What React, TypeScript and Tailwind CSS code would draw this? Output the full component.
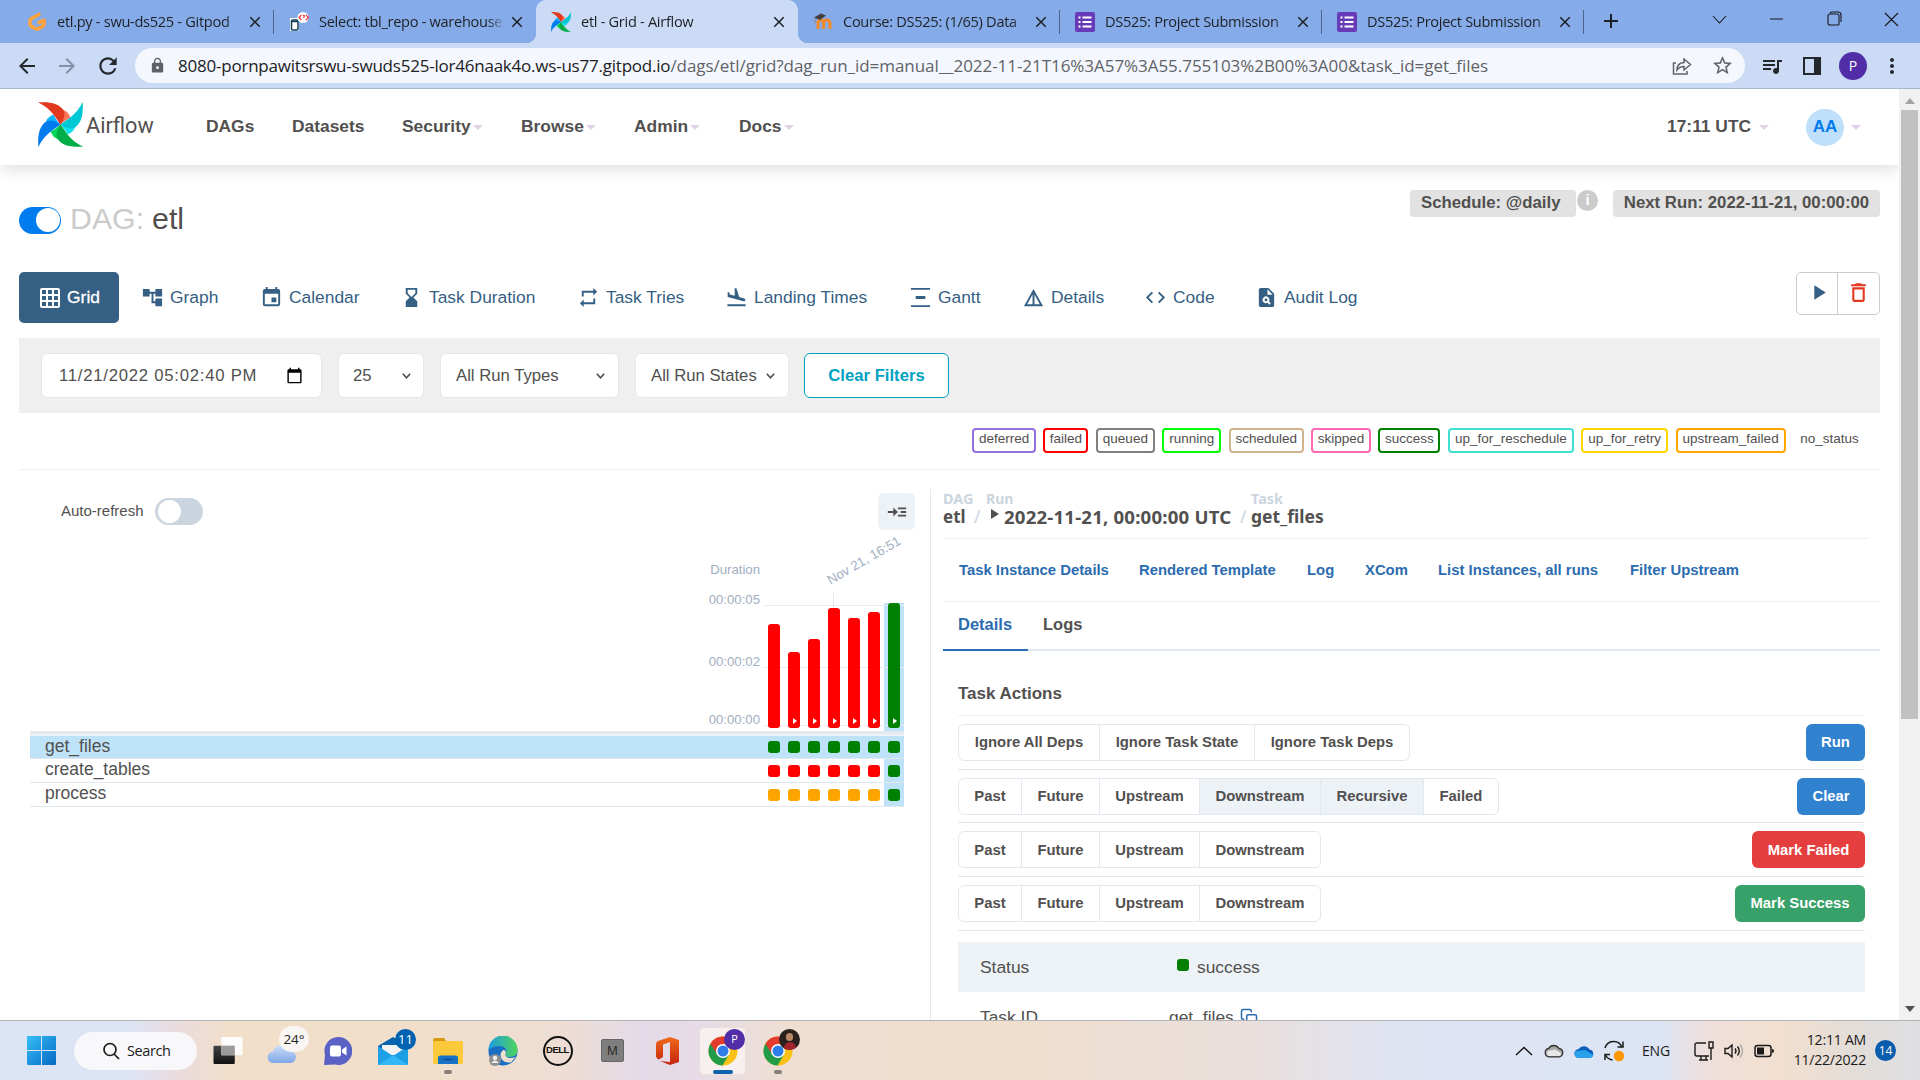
import React from "react";
import {
  MdGridOn, MdAccountTree, MdEvent, MdHourglassBottom, MdRepeat, MdFlightLand, MdVerticalDistribute,
  MdDetails, MdCode, MdPlagiarism, MdPlayArrow, MdDeleteOutline, MdStarBorder, MdQueueMusic, MdArrowBack,
  MdArrowForward, MdRefresh, MdLock, MdClose, MdAdd, MdReadMore, MdMoreVert, MdCalendarToday,
} from "react-icons/md";
import { FiCopy } from "react-icons/fi";

function Pinwheel({ className }: { className: string }) {
  const blades = [
    ["#e43921", "#ff7557", 0],
    ["#00c7d4", "#11e1ee", 90],
    ["#00ad46", "#04d659", 180],
    ["#017cee", "#0cb6ff", 270],
  ] as const;
  return (
    <svg viewBox="0 0 45 45" className={className}>
      {blades.map(([main, light, r]) => (
        <g key={r} transform={`rotate(${r} 22.5 22.5)`}>
          <path fill={light} d="M25.5 8C30 9.500 31 13 32.500 15.500C29 17 25 20 22.500 22.500C22 18 24 14 25.500 8Z" />
          <path fill={main} d="M0 .3C14 -.5 21 2 25.500 8C28 13 25 19 22.500 22.500C18 17 14 7 0 .3Z" />
        </g>
      ))}
    </svg>
  );
}

function Favicon({ kind }: { kind: string }) {
  if (kind === "gitpod")
    return (
      <svg viewBox="0 0 20 20" className="h-5 w-5 shrink-0">
        <path d="M12 2.500L4.500 6.500Q3 7.500 3 9v3q0 1.500 1.500 2.400l4 2.200q1.500.8 3 0l4-2.200Q17 13.500 17 12V8l-5 2.700" fill="none" stroke="#ffa33e" strokeWidth="3.600" strokeLinecap="round" strokeLinejoin="round" />
      </svg>
    );
  if (kind === "adminer")
    return (
      <svg viewBox="0 0 20 20" className="h-5 w-5 shrink-0">
        <path d="M1 6h9v13H1z" fill="#fff" />
        <rect x="2.500" y="8" width="6.500" height="10" rx="1" fill="#fff" stroke="#123f52" strokeWidth="1.500" />
        <path d="M2.500 9.500h6.500" stroke="#123f52" strokeWidth="1.500" />
        <circle cx="14" cy="5.500" r="5.500" fill="#fff" />
        <path d="M12.500 3L10 5.500L12.500 8M17 3l2.500 2.500L17 8M14 3.500q2-.5 1 1.500l-.5 1" fill="none" stroke="#e33" strokeWidth="1.200" />
      </svg>
    );
  if (kind === "airflow") return <Pinwheel className="h-5 w-5 shrink-0" />;
  if (kind === "moodle")
    return (
      <svg viewBox="0 0 20 20" className="h-5 w-5 shrink-0">
        <path d="M5 17v-6q0-3 2.800-3t2.800 3v6M10.600 11q0-3 3-3t3.400 3v6" fill="none" stroke="#f08a2c" strokeWidth="3" />
        <path d="M1 5.500L8 1.500l5 2L7 8z" fill="#41403f" />
        <path d="M2 6v5" stroke="#8a8a8a" />
      </svg>
    );
  return (
    <svg viewBox="0 0 20 20" className="h-5 w-5 shrink-0">
      <rect width="20" height="20" rx="2" fill="#673ab7" />
      <path d="M3.500 5.500h2M3.500 10h2M3.500 14.500h2M7.500 5.500h9M7.500 10h9M7.500 14.500h9" stroke="#fff" strokeWidth="2.200" />
    </svg>
  );
}

const browserTabs = [
  { icon: "gitpod", title: "etl.py - swu-ds525 - Gitpod" },
  { icon: "adminer", title: "Select: tbl_repo - warehouse" },
  { icon: "airflow", title: "etl - Grid - Airflow", active: true },
  { icon: "moodle", title: "Course: DS525: (1/65) Data" },
  { icon: "form", title: "DS525: Project Submission" },
  { icon: "form", title: "DS525: Project Submission" },
];

function TabStrip() {
  return (
    <div className="flex h-[43px] shrink-0 bg-[#86abe9] pl-[12px] text-[#1d2125]">
      {browserTabs.map((t, i) => (
        <div
          key={i}
          className={
            t.active
              ? "relative flex w-[262px] items-center rounded-t-[10px] bg-[#cbdbf6] pl-[15px]"
              : "relative flex w-[262px] items-center pl-[15px]"
          }
        >
          {t.active && (
            <>
              <i className="absolute bottom-0 -left-2.5 h-2.5 w-2.5 bg-[radial-gradient(circle_at_0_0,transparent_10px,#cbdbf6_10.500px)]" />
              <i className="absolute -right-2.5 bottom-0 h-2.5 w-2.5 bg-[radial-gradient(circle_at_100%_0,transparent_10px,#cbdbf6_10.500px)]" />
            </>
          )}
          <Favicon kind={t.icon} />
          <span className="ml-[10px] w-[183px] text-[14.600px] tracking-[-0.300px] whitespace-nowrap [mask-image:linear-gradient(to_right,#000_92%,transparent_102%)]">
            {t.title}
          </span>
          <MdClose className="ml-1.5 h-[18px] w-[18px]" />
          {(i === 0 || i > 2) && <i className="absolute top-[10px] right-0 h-[24px] w-px bg-[#4b6590]" />}
        </div>
      ))}
      <MdAdd className="mt-[9px] ml-[15px] h-6 w-6" />
      <svg viewBox="0 0 200 20" className="mt-[9px] ml-[87px] h-5 w-[200px]" fill="none" stroke="#16191d" strokeWidth="1.100">
        <path d="M3 7l6.500 7L16 7M60 10h13M118 7q0-2 2-2h7q2 0 2 2v8q0 1-1 1h-8q-2 0-2-2zM120 4q1-1 3-1h5q3 0 3 3v7M175 4l13 13M188 4l-13 13" />
      </svg>
    </div>
  );
}

function Toolbar() {
  return (
    <div className="flex h-[46px] shrink-0 items-center border-b border-[#a5b5d2] bg-[#cbdbf6] text-[#24282c]">
      <MdArrowBack className="ml-[15px] h-6 w-6" />
      <MdArrowForward className="ml-4 h-6 w-6 text-[#8490a5]" />
      <MdRefresh className="ml-4 h-[26px] w-[26px]" />
      <div className="ml-[14px] flex h-[35px] w-[1610px] items-center rounded-full bg-[#f4f7fd] pl-[14px]">
        <MdLock className="h-[17px] w-[17px] shrink-0 text-[#5f6368]" />
        <span className="ml-3 w-[1494px] shrink-0 text-[17px] tracking-[-0.050px] whitespace-nowrap text-[#5f6368]">
          <span className="tracking-[-0.220px] text-[#202124]">8080-pornpawitsrswu-swuds525-lor46naak4o.ws-us77.gitpod.io</span>
          /dags/etl/grid?dag_run_id=manual__2022-11-21T16%3A57%3A55.755103%2B00%3A00&amp;task_id=get_files
        </span>
        <svg viewBox="0 0 20 20" className="h-5 w-5 shrink-0" fill="none" stroke="#5f6368" strokeWidth="1.500">
          <path d="M4 7H1.500v11H15v-3M5 14q0-7 7-7.500V3l6.500 5.500L12 14v-3.500q-4.500 0-7 3.500z" />
        </svg>
        <MdStarBorder className="ml-[19px] h-[23px] w-[23px] shrink-0 text-[#5f6368]" />
      </div>
      <MdQueueMusic className="ml-[15px] h-6 w-6" />
      <i className="ml-[19px] h-[18px] w-[18px] border-[2.500px] border-r-[7px] border-[#24282c]" />
      <span className="ml-[18px] flex h-7 w-7 items-center justify-center rounded-full bg-[#512da8] text-[14px] text-white">P</span>
      <MdMoreVert className="ml-[13px] h-6 w-6" />
    </div>
  );
}

const Caret = ({ className }: { className: string }) => (
  <i className={`h-0 w-0 border-x-[5px] border-t-[5px] border-x-transparent border-t-[#e2d3e6] ${className}`} />
);

function NavBar() {
  const items = [
    ["DAGs", "w-[86px]", false],
    ["Datasets", "w-[110px]", false],
    ["Security", "w-[119px]", true],
    ["Browse", "w-[113px]", true],
    ["Admin", "w-[105px]", true],
    ["Docs", "w-[928px]", true],
    ["17:11 UTC", "w-[139px]", true],
  ] as const;
  return (
    <nav className="relative z-10 flex h-[76px] shrink-0 items-center bg-white pl-[38px] font-['Liberation_Sans'] text-[17.400px] font-bold text-[#51504f] shadow-[0_2px_18px_rgba(0,0,0,0.160)]">
      <Pinwheel className="mt-[-5px] h-[45px] w-[45px]" />
      <span className="ml-[3px] w-[120px] pb-[2px] font-['Roboto'] text-[21.700px] font-normal">Airflow</span>
      {items.map(([t, w, caret]) => (
        <span key={t} className={`flex items-center ${w} pb-[2px] whitespace-nowrap`}>
          {t}
          {caret && <Caret className={t === "17:11 UTC" ? "mt-[3px] ml-[8px]" : "mt-[3px] ml-[2px]"} />}
        </span>
      ))}
      <span className="flex h-[37px] w-[38px] items-center justify-center rounded-full bg-[#bfdffb] text-[17px] text-[#017cee]">AA</span>
      <Caret className="ml-[7px]" />
    </nav>
  );
}

function DagHeader() {
  return (
    <div className="flex h-[107px] shrink-0 justify-between pt-[25px]">
      <div className="flex h-[52px] items-center pt-[5px] text-[30.300px] text-[#51504f]">
        <span className="mt-[3px] flex h-[27px] w-[42px] items-center justify-end rounded-full bg-[#017cee] pr-[1px]">
          <i className="h-[24px] w-[24px] rounded-full bg-white" />
        </span>
        <span className="ml-[9px] text-[#cbcbcb]">DAG:</span>
        <span className="ml-[8px]">etl</span>
      </div>
      <div className="flex text-[16.800px] font-bold text-[#51504f]">
        <span className="flex h-[27px] w-[166px] items-center rounded-[4px] bg-[#e2e2e2] pb-[2px] pl-[11px]">Schedule: @daily</span>
        <span className="ml-[1px] flex h-[21px] w-[21px] items-center justify-center rounded-full bg-[#cbcbcb] text-[15px] text-white">i</span>
        <span className="ml-[15px] flex h-[27px] w-[267px] items-center justify-center rounded-[4px] bg-[#e2e2e2] pb-[2px] whitespace-nowrap">
          Next Run: 2022-11-21, 00:00:00
        </span>
      </div>
    </div>
  );
}

function ViewTabs() {
  const tabs = [
    ["Graph", MdAccountTree, "w-[119px]"],
    ["Calendar", MdEvent, "w-[140px]"],
    ["Task Duration", MdHourglassBottom, "w-[177px]"],
    ["Task Tries", MdRepeat, "w-[148px]"],
    ["Landing Times", MdFlightLand, "w-[184px]"],
    ["Gantt", MdVerticalDistribute, "w-[113px]"],
    ["Details", MdDetails, "w-[122px]"],
    ["Code", MdCode, "w-[111px]"],
    ["Audit Log", MdPlagiarism, "w-[120px]"],
  ] as const;
  return (
    <div className="flex h-[66px] shrink-0 text-[17.400px] text-[#365f84]">
      <span className="flex h-[51px] w-[100px] items-center justify-center gap-[5px] rounded-[5px] bg-[#365f84] text-white">
        <MdGridOn className="h-[24px] w-[24px]" />
        <span className="[-webkit-text-stroke:0.300px_white]">Grid</span>
      </span>
      <div className="ml-[22px] flex h-[51px]">
        {tabs.map(([t, Icon, w]) => (
          <span key={t} className={`flex items-center gap-[6px] whitespace-nowrap ${w}`}>
            <Icon className="h-[23px] w-[23px] shrink-0" />
            {t}
          </span>
        ))}
      </div>
      <div className="ml-auto flex h-[43px] w-[84px] rounded-[5px] border border-[#cbcbcb]">
        <span className="flex w-[41px] items-center justify-center border-r border-[#cbcbcb] pb-0.5 pl-[3px]">
          <MdPlayArrow className="h-[25px] w-[25px]" />
        </span>
        <span className="flex flex-1 items-center justify-center pb-0.5 text-[#e43921]">
          <MdDeleteOutline className="h-[25px] w-[25px]" />
        </span>
      </div>
    </div>
  );
}

function Chevron({ className }: { className?: string }) {
  return (
    <svg viewBox="0 0 12 8" className={`h-[8px] w-[11px] ${className ?? ""}`} fill="none" stroke="#51504f" strokeWidth="1.800">
      <path d="M2 1.500l4 4.500 4-4.500" />
    </svg>
  );
}

function FilterBar() {
  const box = "flex h-[45px] items-center justify-between rounded-[6px] border border-[#e2e8f0] bg-white whitespace-nowrap";
  return (
    <div className="flex h-[75px] shrink-0 items-center bg-[#efefef] pl-[22px] text-[16.700px] text-[#51504f]">
      <span className={`${box} w-[281px] pr-[18px] pl-[17px]`}>
        <span className="tracking-[0.760px]">11/21/2022 05:02:40 PM</span>
        <MdCalendarToday className="h-[17px] w-[17px] text-black" />
      </span>
      <span className={`${box} ml-[16px] w-[86px] pr-[11px] pl-[14px]`}>25<Chevron /></span>
      <span className={`${box} ml-[16px] w-[179px] pr-[12px] pl-[15px]`}>All Run Types<Chevron /></span>
      <span className={`${box} ml-[16px] w-[154px] pr-[12px] pl-[15px]`}>All Run States<Chevron /></span>
      <span className="ml-[15px] flex h-[45px] w-[145px] items-center justify-center rounded-[6px] border border-[#00a2c2] bg-white font-bold text-[#00a2c2]">
        Clear Filters
      </span>
    </div>
  );
}

function StatusLegend() {
  const s = [
    ["deferred", "w-[64px] border-[#9370db]"],
    ["failed", "w-[45px] border-[#ff0000]"],
    ["queued", "w-[59px] border-[#808080]"],
    ["running", "w-[59px] border-[#00ff00]"],
    ["scheduled", "w-[75px] border-[#d2b48c]"],
    ["skipped", "w-[60px] border-[#ff69b4]"],
    ["success", "w-[62px] border-[#008000]"],
    ["up_for_reschedule", "w-[126px] border-[#40e0d0]"],
    ["up_for_retry", "w-[87px] border-[#ffd700]"],
    ["upstream_failed", "w-[110px] border-[#ffa500]"],
    ["no_status", "w-[73px] border-transparent"],
  ];
  return (
    <div className="flex h-[57px] shrink-0 justify-end gap-[7.400px] border-b border-[#edf0f5] pt-[15px] pr-[14px] text-[13.500px] text-[#51504f]">
      {s.map(([t, c]) => (
        <span key={t} className={`flex h-[25px] items-center justify-center rounded-[4px] border-2 pb-[2px] ${c}`}>{t}</span>
      ))}
    </div>
  );
}

const runs = [
  { h: "h-[104px]", manual: false },
  { h: "h-[76px]", manual: true },
  { h: "h-[89px]", manual: true },
  { h: "h-[120px]", manual: true },
  { h: "h-[110px]", manual: true },
  { h: "h-[116px]", manual: true },
  { h: "h-[125px]", manual: true },
];

const taskRows = [
  { name: "get_files", color: "bg-[#008000]", row: "h-[23px] bg-[#bee3f8]" },
  { name: "create_tables", color: "bg-[#ff0000]", row: "h-[24px]" },
  { name: "process", color: "bg-[#ffa500]", row: "h-[24px]" },
];

function GridPanel() {
  return (
    <section className="flex w-[912px] shrink-0 flex-col border-r border-[#e2e8f0]">
      <div className="mt-[4px] flex h-[37px] items-center pl-[42px] text-[15px] text-[#51504f]">
        <span className="w-[94px]">Auto-refresh</span>
        <span className="flex h-[27px] w-[48px] items-center rounded-full bg-[#cbd5e0] pl-[3px]">
          <i className="h-[23px] w-[23px] rounded-full bg-white" />
        </span>
        <span className="ml-[675px] flex h-[37px] w-[37px] items-center justify-center rounded-[6px] bg-[#edf2f7]">
          <MdReadMore className="h-[22px] w-[22px]" />
        </span>
      </div>
      <div className="flex h-[201px] pl-[11px]">
        <div className="flex w-[730px] flex-col items-end text-[13.200px] leading-[20px] text-[#a0aec0]">
          <span className="mt-[30px]">Duration</span>
          <span className="mt-[10px]">00:00:05</span>
          <span className="mt-[42px]">00:00:02</span>
          <span className="mt-[38px]">00:00:00</span>
        </div>
        <div className="relative ml-[4px] flex w-[140px] items-end">
          <i className="absolute top-[75px] left-0 h-px w-full bg-[#e9edf3]" />
          <i className="absolute top-[137px] left-0 h-px w-full bg-[#e9edf3]" />
          <i className="absolute top-[195px] left-0 h-px w-full bg-[#e9edf3]" />
          <i className="absolute top-[63px] left-[69px] h-4 w-px bg-[#e2e8f0]" />
          <span className="absolute top-[41px] left-[69px] origin-bottom-left -rotate-[30deg] text-[13.200px] leading-[18px] whitespace-nowrap text-[#a0aec0]">
            Nov 21, 16:51
          </span>
          {runs.map((r, i) => (
            <span
              key={i}
              className={i === 6 ? "flex h-[128px] w-5 items-end justify-center bg-[#bee3f8] pb-[3px]" : "flex h-[128px] w-5 items-end justify-center pb-[3px]"}
            >
              <i className={`relative flex w-[12px] items-end justify-center rounded-[3px] pb-[4px] ${r.h} ${i === 6 ? "bg-[#008000]" : "bg-[#ff0000]"}`}>
                {r.manual && <b className="ml-[1px] h-0 w-0 border-y-[3px] border-l-[4.500px] border-y-transparent border-l-white" />}
              </i>
            </span>
          ))}
        </div>
      </div>
      <div className="ml-[11px] h-[5px] w-[874px] border-b-2 border-[#edf2f7] bg-[#e2e8f0]" />
      {taskRows.map((r) => (
        <div key={r.name} className={`ml-[11px] flex w-[874px] border-b border-[#e2e8f0] ${r.row}`}>
          <span className="w-[734px] pl-[15px] text-[17.500px] leading-[21px] text-[#51504f]">{r.name}</span>
          {runs.map((_, i) => (
            <span key={i} className={i === 6 ? "flex w-5 items-center justify-center bg-[#bee3f8]" : "flex w-5 items-center justify-center"}>
              <i className={`h-[12px] w-[12px] rounded-[3px] ${i === 6 ? "bg-[#008000]" : r.color}`} />
            </span>
          ))}
        </div>
      ))}
    </section>
  );
}

type Opt = [string, string, boolean?];
const past: Opt = ["Past", "w-[62px]"];
const future: Opt = ["Future", "w-[78px]"];
const up: Opt = ["Upstream", "w-[100px]"];
const actions: { opts: Opt[]; label: string; cls: string }[] = [
  {
    opts: [["Ignore All Deps", "w-[140px]"], ["Ignore Task State", "w-[155px]"], ["Ignore Task Deps", "w-[155px]"]],
    label: "Run",
    cls: "w-[59px] bg-[#3182ce]",
  },
  {
    opts: [past, future, up, ["Downstream", "w-[121px]", true], ["Recursive", "w-[103px]", true], ["Failed", "w-[75px]"]],
    label: "Clear",
    cls: "w-[68px] bg-[#3182ce]",
  },
  { opts: [past, future, up, ["Downstream", "w-[121px]"]], label: "Mark Failed", cls: "w-[113px] bg-[#e53e3e]" },
  { opts: [past, future, up, ["Downstream", "w-[121px]"]], label: "Mark Success", cls: "w-[130px] bg-[#38a169]" },
];

function DetailsPanel() {
  const links = [
    ["Task Instance Details", "w-[180px]"],
    ["Rendered Template", "w-[168px]"],
    ["Log", "w-[58px]"],
    ["XCom", "w-[73px]"],
    ["List Instances, all runs", "w-[192px]"],
    ["Filter Upstream", "w-[120px]"],
  ];
  return (
    <section className="ml-[12px] flex w-[937px] shrink-0 flex-col text-[#51504f] [&>*]:shrink-0">
      <div className="flex h-[50px] w-[926px] border-b border-[#edf0f5] font-['Noto_Sans'] text-[17.500px] leading-[18px] font-bold whitespace-nowrap">
        <div className="w-[31px]">
          <div className="pt-[1px] text-[14.400px] text-[#cbd5e0]">DAG</div>
          <div className="text-[17px] leading-[17px]">etl</div>
        </div>
        <div className="w-[12px] pt-[18px] font-normal text-[#cbd5e0]">/</div>
        <div className="w-[254px]">
          <div className="pt-[1px] text-[14px] text-[#cbd5e0]">Run</div>
          <div className="flex pl-[5px] text-[18.600px] tracking-[0.200px]">
            <i className="mt-[1px] mr-[5px] h-0 w-0 border-y-[5px] border-l-[8px] border-y-transparent border-l-[#51504f]" />
            2022-11-21, 00:00:00 UTC
          </div>
        </div>
        <div className="w-[11px] pt-[18px] font-normal text-[#cbd5e0]">/</div>
        <div>
          <div className="pt-[1px] text-[14.400px] text-[#cbd5e0]">Task</div>
          <div className="leading-[17px]">get_files</div>
        </div>
      </div>
      <div className="flex h-[63px] items-center border-b border-[#edf0f5] pl-[16px] text-[14.850px] font-bold whitespace-nowrap text-[#2b6cb0]">
        {links.map(([t, w]) => (
          <span key={t} className={w}>{t}</span>
        ))}
      </div>
      <div className="flex h-[49px] border-b-2 border-[#e2e8f0] text-[16.500px] leading-[45px] font-bold">
        <span className="-mb-[2px] w-[85px] border-b-2 border-[#2b6cb0] pl-[15px] text-[#2b6cb0]">Details</span>
        <span className="pl-[15px]">Logs</span>
      </div>
      <div className="flex flex-col px-[15px]">
        <div className="h-[65px] border-b border-[#edf0f5] pt-[30px] text-[17px] leading-[26px] font-bold">Task Actions</div>
        {actions.map((a) => (
          <div key={a.label} className="flex h-[53.700px] items-center justify-between border-b border-[#e2e8f0] text-[14.850px] font-bold whitespace-nowrap">
            <div className="flex h-[37px] overflow-hidden rounded-[6px] border border-[#e2e8f0]">
              {a.opts.map(([t, w, on], i) => (
                <span key={t} className={`flex items-center justify-center ${w} ${i > 0 ? "border-l border-[#e2e8f0]" : ""} ${on ? "bg-[#edf2f7]" : ""}`}>
                  {t}
                </span>
              ))}
            </div>
            <span className={`flex h-[37px] items-center justify-center rounded-[6px] text-white ${a.cls}`}>{a.label}</span>
          </div>
        ))}
        <div className="mt-[11px] flex h-[50px] shrink-0 items-center bg-[#edf2f7] pl-[22px] text-[17.400px]">
          <span className="w-[197px]">Status</span>
          <i className="mr-[8px] mb-[4px] h-[12px] w-[12px] rounded-[3px] bg-[#008000]" />
          success
        </div>
        <div className="flex h-[50px] shrink-0 items-center pl-[22px] text-[17.400px]">
          <span className="w-[189px]">Task ID</span>
          get_files
          <FiCopy className="ml-[6px] h-[18px] w-[18px] text-[#2b6cb0]" />
        </div>
      </div>
    </section>
  );
}

function Scrollbar() {
  return (
    <div className="flex w-[21px] shrink-0 flex-col items-center bg-[#f1f1f1]">
      <i className="mt-[9px] h-0 w-0 border-x-[5px] border-b-[6px] border-x-transparent border-b-[#a3a3a3]" />
      <i className="mt-[6px] h-[609px] w-[17px] bg-[#c1c1c1]" />
      <i className="mt-auto mb-[8px] h-0 w-0 border-x-[5px] border-t-[6px] border-x-transparent border-t-[#505050]" />
    </div>
  );
}

function Chrome() {
  return (
    <svg viewBox="0 0 30 30" className="h-[30px] w-[30px]">
      <circle cx="15" cy="15" r="14.500" fill="#fbc116" />
      <path d="M2.400 7.700A14.500 14.500 0 0 0 14.500 29.500L21 18.500 15 15z" fill="#229b48" />
      <path d="M2.400 7.700A14.500 14.500 0 0 1 27.600 7.700H15L9 18z" fill="#e33b2e" />
      <circle cx="15" cy="15" r="7" fill="#fff" />
      <circle cx="15" cy="15" r="5.500" fill="#2f7de9" />
    </svg>
  );
}

function TaskbarIcons() {
  const cell = "relative flex h-[59px] w-[55px] items-center justify-center";
  return (
    <>
      <span className={cell}>
        <svg viewBox="0 0 30 30" className="h-[29px] w-[30px]">
          <defs><linearGradient id="tv" x2="0" y2="1"><stop stopColor="#444" /><stop offset="1" stopColor="#111" /></linearGradient></defs>
          <rect x="0" y="10" width="22" height="19" rx="1" fill="url(#tv)" />
          <rect x="8" y="1" width="22" height="19" rx="1" fill="#fff" opacity=".9" />
          <rect x="8" y="10" width="14" height="10" fill="#9b9b9b" />
        </svg>
      </span>
      <span className={cell}>
        <svg viewBox="0 0 32 26" className="mt-1 h-[25px] w-[31px]">
          <defs><linearGradient id="cl" x2="0" y2="1"><stop stopColor="#cfe0fa" /><stop offset="1" stopColor="#7ea5e6" /></linearGradient></defs>
          <path d="M7 24a6 6 0 0 1-1-12 9 9 0 0 1 17-1 6.600 6.600 0 0 1 2 13z" fill="url(#cl)" />
        </svg>
        <b className="absolute top-[5px] left-[24px] flex h-[26px] w-[30px] items-center justify-center rounded-full bg-[#f8f5f2] text-[13.500px] font-normal text-[#222]">24°</b>
      </span>
      <span className={cell}>
        <svg viewBox="0 0 28 28" className="h-[28px] w-[28px]">
          <path d="M14 0a14 14 0 1 1-3 27.600L0 28 1 18A14 14 0 0 1 14 0z" fill="#5b62c6" />
          <rect x="6" y="8.500" width="11" height="11" rx="2" fill="#fff" />
          <path d="M18 12.500l4.500-3v9l-4.500-3z" fill="#fff" />
        </svg>
      </span>
      <span className={cell}>
        <svg viewBox="0 0 30 28" className="h-[28px] w-[30px]">
          <path d="M0 9L15 0l15 9v19H0z" fill="#0a63b0" />
          <path d="M4 8h22v10H4z" fill="#f3f3f3" />
          <path d="M0 9l15 10L30 9v19H0z" fill="#1f9fe6" />
          <path d="M0 28l15-10 15 10z" fill="#32b8f5" />
        </svg>
        <b className="absolute top-[8px] left-[30px] flex h-[21px] w-[21px] items-center justify-center rounded-full bg-[#0063b1] text-[13px] font-normal text-white">11</b>
      </span>
      <span className={cell}>
        <svg viewBox="0 0 30 28" className="h-[28px] w-[30px]">
          <path d="M0 3q0-2 2-2h9l3 4h-14z" fill="#d99a10" />
          <rect y="4" width="30" height="23" rx="1.500" fill="#fcc93a" />
          <path d="M5 27v-6q0-2.500 2.500-2.500h15q2.500 0 2.500 2.500v6z" fill="#1672c4" />
          <path d="M10.500 22.500h9" stroke="#0a4d91" strokeWidth="1.500" />
        </svg>
        <i className="absolute bottom-[6px] h-[4px] w-[8px] rounded-full bg-[#86807a]" />
      </span>
      <span className={cell}>
        <svg viewBox="0 0 30 30" className="h-[30px] w-[30px]">
          <defs>
            <linearGradient id="ed"><stop stopColor="#1d9de2" /><stop offset="1" stopColor="#4fd45b" /></linearGradient>
          </defs>
          <circle cx="15" cy="15" r="14.500" fill="#1a6fc4" />
          <path d="M.5 14A14.500 14.500 0 0 1 29.500 14c0 5-4 7-8 7-3 0-5-1-4-3 3-5-2-8-6-8-5 0-9 2-11 4z" fill="url(#ed)" />
          <path d="M17.500 18c-1 4 5 5 10 3l-4 5c-6 2-11-2-11-7 0-2 1-4 3-5 2 0 3 2 2 4z" fill="#efdfcd" />
          <circle cx="7" cy="24" r="6" fill="#8f8f8f" /><circle cx="7" cy="22" r="2.200" fill="#eee" /><path d="M3 27q4-5 8 0z" fill="#eee" />
        </svg>
      </span>
      <span className={cell}>
        <span className="flex h-[30px] w-[30px] items-center justify-center rounded-full border-2 border-[#111] font-['Liberation_Sans'] text-[9.500px] font-bold tracking-[-0.500px] text-[#111]">DELL</span>
      </span>
      <span className={cell}>
        <span className="flex h-[23px] w-[23px] items-center justify-center rounded-[2px] border border-[#666] bg-[#7e7e7e] text-[12px] text-[#222]">M</span>
      </span>
      <span className={cell}>
        <svg viewBox="0 0 24 28" className="h-[28px] w-[24px]">
          <defs><linearGradient id="of" x2="0" y2="1"><stop stopColor="#f06a1a" /><stop offset="1" stopColor="#c4240e" /></linearGradient></defs>
          <path d="M14 0l9 3v22l-9 3-10-4 10 1V5L7 7.500V20l-4 2.500q-3-1-3-4V7q0-2 2-3z" fill="url(#of)" />
        </svg>
      </span>
      <span className={cell}>
        <span className="flex h-[48px] w-[47px] items-center justify-center rounded-[5px] border border-[#e8e0dc] bg-[#f7f0ee]"><Chrome /></span>
        <b className="absolute top-[8px] left-[29px] flex h-[21px] w-[21px] items-center justify-center rounded-full bg-[#512da8] text-[11px] font-normal text-white">P</b>
        <i className="absolute bottom-[6px] h-[4px] w-[20px] rounded-full bg-[#0f63ae]" />
      </span>
      <span className={cell}>
        <Chrome />
        <b className="absolute top-[8px] left-[29px] flex h-[21px] w-[21px] items-end justify-center overflow-hidden rounded-full bg-[#2b211c]">
          <i className="absolute top-[4px] h-[8px] w-[7px] rounded-full bg-[#b98768]" />
          <i className="h-[8px] w-[12px] rounded-t-full bg-[#a3232c]" />
        </b>
        <i className="absolute bottom-[6px] h-[4px] w-[8px] rounded-full bg-[#86807a]" />
      </span>
    </>
  );
}

function Taskbar() {
  return (
    <footer className="flex h-[60px] shrink-0 items-center border-t border-[#b3b3b6] bg-[linear-gradient(90deg,#dbe5f6_0,#dde4f4_130px,#eadcdc_180px,#f1dfc9_230px,#f1dfcb_420px,#eeddd3_560px,#e4dbe8_640px,#e6dbe6_700px,#efdfd2_790px,#f0dfcd_1000px,#e9dfdc_1250px,#dfe4f3_1400px,#dce4f4_1660px,#efdfda_1710px,#f2dfcf_1780px,#e2ddd9_1860px,#dfdfe3_1920px)] text-[#1b1b1b]">
      <svg viewBox="0 0 30 30" className="ml-[27px] h-[29px] w-[29px]">
        <defs><linearGradient id="w" x2="1" y2="1"><stop stopColor="#35c0f5" /><stop offset="1" stopColor="#0568c4" /></linearGradient></defs>
        <path fill="url(#w)" d="M1 0h13.500v14.500H0V1Q0 0 1 0zM15.500 0H29q1 0 1 1v13.500H15.500zM0 15.500h14.500V30H1q-1 0-1-1zM15.500 15.500H30V29q0 1-1 1H15.500z" />
      </svg>
      <span className="ml-[18px] flex h-[38px] w-[123px] items-center rounded-full bg-[#f8f7f9] pl-[28px] text-[14.500px]">
        <svg viewBox="0 0 18 18" className="mr-[7px] h-[18px] w-[18px]" fill="none" stroke="#1b1b1b" strokeWidth="1.700"><circle cx="8" cy="7.500" r="6" /><path d="M12 12l5 5" /></svg>
        <span className="tracking-[-0.400px]">Search</span>
      </span>
      <span className="ml-[3px] flex"><TaskbarIcons /></span>
      <span className="ml-auto flex items-center">
        <svg viewBox="0 0 18 10" className="h-[10px] w-[18px]" fill="none" stroke="#1b1b1b" strokeWidth="1.500"><path d="M1 9l8-7.500L17 9" /></svg>
        <svg viewBox="0 0 20 14" className="ml-[11px] h-[15px] w-[20px]">
          <path d="M5 13.300a4.300 4.300 0 0 1-.3-8.500A6 6 0 0 1 15 5a4.200 4.200 0 0 1 .3 8.300z" fill="#a8a8a8" stroke="#333" strokeWidth="1.300" />
          <path d="M5 12.600a3 3 0 0 1-1-5l7-1.600 6 3.500q0 3-2 3.100z" fill="#e8e8e8" />
        </svg>
        <svg viewBox="0 0 20 14" className="ml-[10px] h-[14px] w-[20px]">
          <path d="M5 14a4.500 4.500 0 0 1-.3-9A6.500 6.500 0 0 1 15.500 5.500 4.300 4.300 0 0 1 15.600 14z" fill="#0a5fb8" />
          <path d="M5 14a4 4 0 0 1-3-7l9-1 8.500 5q-1 3-3.900 3z" fill="#28a0ea" />
        </svg>
        <svg viewBox="0 0 22 22" className="ml-[9px] h-[22px] w-[22px]" fill="none" stroke="#1b1b1b" strokeWidth="1.500">
          <path d="M2 8A9 9 0 0 1 19 7M20 1.500V7h-5.500M2 20v-5.500H7M2.500 15q2 4 7 5" /><circle cx="16" cy="16" r="5.200" fill="#ff9800" stroke="none" />
        </svg>
        <span className="ml-[17px] w-[52px] text-[14px] tracking-[-0.200px]">ENG</span>
        <svg viewBox="0 0 20 20" className="h-[20px] w-[20px]" fill="none" stroke="#1b1b1b" strokeWidth="1.400">
          <path d="M12 2H3Q1 2 1 4v9q0 2 2 2h12M5 19h9M7 15v4M12 15v4M15 1h4v6h-4zM17 7v12" />
        </svg>
        <svg viewBox="0 0 20 18" className="ml-[10px] h-[18px] w-[20px]" fill="none" stroke="#1b1b1b" strokeWidth="1.400">
          <path d="M1 6.500h3L8 3v12l-4-3.500H1zM11 6.500q2 2.500 0 5M13.500 4.500q3.500 4.500 0 9" /><path d="M16 2.500q5 6.500 0 13" stroke="#aaa" />
        </svg>
        <svg viewBox="0 0 20 14" className="ml-[10px] h-[14px] w-[20px]">
          <rect x="1" y="1.500" width="16" height="11" rx="2.500" fill="none" stroke="#1b1b1b" strokeWidth="1.500" /><rect x="3" y="3.500" width="7" height="7" fill="#1b1b1b" /><path d="M18 5q2 0 2 2t-2 2z" fill="#1b1b1b" />
        </svg>
        <span className="w-[92px] pb-[2px] text-right text-[14.100px] leading-[20px] tracking-[-0.250px]">12:11 AM<br />11/22/2022</span>
        <b className="mr-[24px] ml-[9px] flex h-[21px] w-[21px] items-center justify-center rounded-full bg-[#0a5cad] text-[12px] font-normal text-white">14</b>
      </span>
    </footer>
  );
}

export default function App() {
  return (
    <div className="flex h-[1080px] w-[1920px] flex-col overflow-hidden bg-white font-['Open_Sans',sans-serif]">
      <TabStrip />
      <Toolbar />
      <div className="flex h-[931px] shrink-0">
        <div className="flex w-[1899px] flex-col overflow-hidden bg-white">
          <NavBar />
          <main className="flex h-[855px] flex-col overflow-hidden pr-[19px] pl-[19px] font-['Liberation_Sans',sans-serif]">
            <DagHeader />
            <ViewTabs />
            <FilterBar />
            <StatusLegend />
            <div className="mt-[19px] flex h-[540px] shrink-0">
              <GridPanel />
              <DetailsPanel />
            </div>
          </main>
        </div>
        <Scrollbar />
      </div>
      <Taskbar />
    </div>
  );
}
